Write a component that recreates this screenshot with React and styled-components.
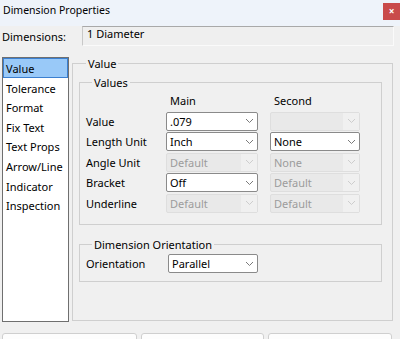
import React from "react";
import styled, { createGlobalStyle } from "styled-components";

const GlobalStyle = createGlobalStyle`
  html, body {
    margin: 0;
    padding: 0;
    background: #f0f0f0;
  }
  body {
    font-family: "Noto Sans", "Liberation Sans", sans-serif;
    font-size: 11px;
    color: #000;
  }
`;

const Window = styled.div`
  width: 400px;
  height: 339px;
  overflow: hidden;
  background: #f0f0f0;
  display: flex;
  flex-direction: column;
`;

const TitleBar = styled.div`
  height: 26px;
  flex: none;
  display: flex;
  align-items: flex-start;
  justify-content: space-between;
  background: #eef3fa;
`;

const Title = styled.span`
  padding: 3px 0 0 3px;
  font-size: 10.5px;
`;

const CloseButton = styled.div`
  width: 17px;
  height: 17px;
  margin-top: 3px;
  background: #c94a4a;
  color: #fff;
  font-size: 10px;
  font-weight: bold;
  line-height: 16px;
  text-align: center;
`;

const HeaderRow = styled.div`
  display: flex;
  align-items: center;
  height: 20px;
  padding: 0 6px 0 2px;
`;

const HeaderLabel = styled.span`
  width: 80px;
`;

const ReadOnlyField = styled.div`
  flex: 1;
  height: 18px;
  box-sizing: content-box;
  border: 1px solid;
  border-color: #a9a9a9 #fafafa #fafafa #c8c8c8;
  background: #efefef;
  padding-left: 4px;
  line-height: 14px;
`;

const Body = styled.div`
  display: flex;
  gap: 3px;
  padding: 11px 7px 0 2px;
`;

const ListBox = styled.div`
  width: 65px;
  height: 263px;
  background: #fff;
  border: 1px solid #6f6f6f;
  display: flex;
  flex-direction: column;
`;

const ListItem = styled.div`
  height: 19.6px;
  line-height: 19px;
  padding-left: 2px;
  background: ${(p) => (p.$selected ? "#99c9f8" : "transparent")};
  border: 1px solid ${(p) => (p.$selected ? "#3b7fd0" : "transparent")};
  box-sizing: border-box;
`;

const Group = styled.fieldset`
  margin: ${(p) => p.$top || "0"} 0 0 0;
  padding: ${(p) => p.$pad || "0 6px"};
  border: 1px solid #cfcfcf;
  min-width: 0;
  flex: ${(p) => (p.$grow ? 1 : "none")};
  height: ${(p) => p.$height || "auto"};
  box-sizing: border-box;
  display: flex;
  flex-direction: column;
`;

const Legend = styled.legend`
  padding: 0 2px;
  margin-left: ${(p) => p.$indent || "6px"};
  line-height: 13px;
`;

const Grid = styled.div`
  display: grid;
  grid-template-columns: 68px 92px 90px;
  column-gap: 12px;
  row-gap: 1.6px;
  align-items: center;
  margin-top: 2px;
`;

const ColHead = styled.div`
  padding-left: 4px;
  height: 19px;
  line-height: 19px;
`;

const RowLabel = styled.div`
  width: ${(p) => p.$width || "auto"};
  white-space: nowrap;
`;

const Combo = styled.div`
  width: ${(p) => p.$width || "auto"};
  height: 19px;
  box-sizing: border-box;
  display: flex;
  align-items: center;
  border: 1px solid ${(p) => (p.$disabled ? "#dedede" : "#8a8a8a")};
  border-radius: 2px;
  background: ${(p) => (p.$disabled ? "#e9e9e9" : "#fff")};
  color: ${(p) => (p.$disabled ? "#9c9c9c" : "#000")};
`;

const ComboText = styled.span`
  flex: 1;
  padding-left: 3px;
`;

const ComboArrow = styled.span`
  width: 16px;
  height: 100%;
  display: flex;
  align-items: center;
  justify-content: center;
  background: ${(p) => (p.$disabled ? "#f0f0f0" : "transparent")};
`;

const Row = styled.div`
  display: flex;
  align-items: center;
  margin-top: 3px;
`;

const ButtonRow = styled.div`
  display: flex;
  gap: 4px;
  padding: 11px 8px 0 2px;
`;

const FooterButton = styled.div`
  flex: ${(p) => p.$flex};
  height: 22px;
  border: 1px solid #cfcfcf;
  border-radius: 3px;
  background: #fdfdfd;
`;

const Chevron = ({ disabled }) => (
  <svg width="9" height="6" viewBox="0 0 9 6">
    <path
      d="M1 1 L4.5 4.5 L8 1"
      fill="none"
      stroke={disabled ? "#cdcdcd" : "#7a7a7a"}
      strokeWidth="1"
    />
  </svg>
);

const Select = ({ value, disabled, width }) => (
  <Combo $disabled={disabled} $width={width}>
    <ComboText>{value}</ComboText>
    <ComboArrow $disabled={disabled}>
      <Chevron disabled={disabled} />
    </ComboArrow>
  </Combo>
);

const pages = [
  "Value",
  "Tolerance",
  "Format",
  "Fix Text",
  "Text Props",
  "Arrow/Line",
  "Indicator",
  "Inspection",
];

const rows = [
  { label: "Value", main: ".079", second: "", secondOff: true },
  { label: "Length Unit", main: "Inch", second: "None" },
  { label: "Angle Unit", main: "Default", mainOff: true, second: "None", secondOff: true },
  { label: "Bracket", main: "Off", second: "Default", secondOff: true },
  { label: "Underline", main: "Default", mainOff: true, second: "Default", secondOff: true },
];

export default function App() {
  return (
    <Window>
      <GlobalStyle />
      <TitleBar>
        <Title>Dimension Properties</Title>
        <CloseButton>×</CloseButton>
      </TitleBar>
      <HeaderRow>
        <HeaderLabel>Dimensions:</HeaderLabel>
        <ReadOnlyField>1 Diameter</ReadOnlyField>
      </HeaderRow>
      <Body>
        <ListBox>
          {pages.map((p, i) => (
            <ListItem key={p} $selected={i === 0}>
              {p}
            </ListItem>
          ))}
        </ListBox>
        <Group $grow $height="264px" $pad="0 10px 0 6px">
          <Legend $indent="7px">Value</Legend>
          <Group $pad="0 6px" $height="149px" $top="6px">
            <Legend>Values</Legend>
            <Grid>
              <span />
              <ColHead>Main</ColHead>
              <ColHead>Second</ColHead>
              {rows.map((r) => (
                <React.Fragment key={r.label}>
                  <RowLabel>{r.label}</RowLabel>
                  <Select value={r.main} disabled={r.mainOff} />
                  <Select value={r.second} disabled={r.secondOff} />
                </React.Fragment>
              ))}
            </Grid>
          </Group>
          <Group $pad="0 6px" $height="44px" $top="13px">
            <Legend>Dimension Orientation</Legend>
            <Row>
              <RowLabel $width="82px">Orientation</RowLabel>
              <Select value="Parallel" width="90px" />
            </Row>
          </Group>
        </Group>
      </Body>
      <ButtonRow>
        <FooterButton $flex={135} />
        <FooterButton $flex={123} />
        <FooterButton $flex={124} />
      </ButtonRow>
    </Window>
  );
}
